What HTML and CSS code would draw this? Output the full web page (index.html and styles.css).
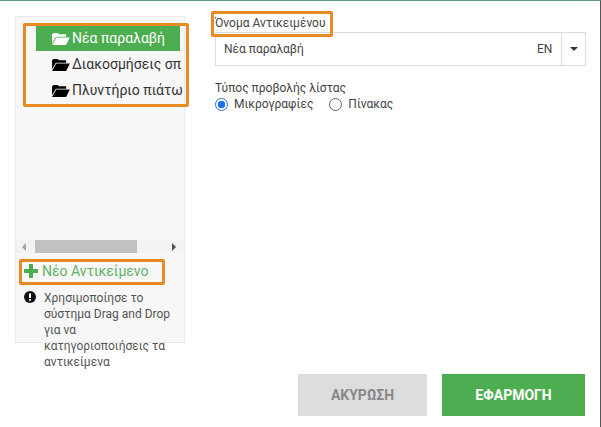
FILE: index.html
```html
<!DOCTYPE html>
<html lang="el">
<head>
<meta charset="utf-8">
<title>Αντικείμενα</title>
<link rel="stylesheet" href="styles.css">
</head>
<body>
<div class="dialog">
  <div class="main">
    <aside class="side">
      <div class="tree-wrap">
        <ul class="tree">
          <li class="node active">
            <svg class="folder" viewBox="0 0 20 16"><path d="M1 3.5 2.5 2H7l1.5 1.5H16V6H5L1 13Z"/><path d="M5.5 7H20l-4 8H1Z"/></svg>
            <span>Νέα παραλαβή</span>
          </li>
          <li class="node">
            <svg class="folder" viewBox="0 0 20 16"><path d="M1 3.5 2.5 2H7l1.5 1.5H16V6H5L1 13Z"/><path d="M5.5 7H20l-4 8H1Z"/></svg>
            <span>Διακοσμήσεις σπ</span>
          </li>
          <li class="node">
            <svg class="folder" viewBox="0 0 20 16"><path d="M1 3.5 2.5 2H7l1.5 1.5H16V6H5L1 13Z"/><path d="M5.5 7H20l-4 8H1Z"/></svg>
            <span>Πλυντήριο πιάτω</span>
          </li>
        </ul>
        <div class="hl hl-tree"></div>
      </div>
      <div class="scrollbar">
        <span class="arrow left"></span>
        <span class="track"><span class="thumb"></span></span>
        <span class="arrow right"></span>
      </div>
      <div class="add">
        <svg class="plus" viewBox="0 0 14 14"><path d="M5 0h4v5h5v4H9v5H5V9H0V5h5Z"/></svg>
        <span>Νέο Αντικείμενο</span>
        <div class="hl hl-add"></div>
      </div>
      <div class="hint">
        <svg class="info" viewBox="0 0 12 12"><circle cx="6" cy="6" r="6"/><rect class="mark" x="5" y="2.4" width="2" height="4.6"/><rect class="mark" x="5" y="8" width="2" height="1.8"/></svg>
        <p>Χρησιμοποίησε το σύστημα Drag and Drop για να κατηγοριοποιήσεις τα αντικείμενα</p>
      </div>
    </aside>
    <section class="form">
      <label class="name-label">Όνομα Αντικειμένου<span class="hl hl-label"></span></label>
      <div class="input-row">
        <span class="value">Νέα παραλαβή</span>
        <span class="lang">EN</span>
        <span class="caret-box"><span class="caret"></span></span>
      </div>
      <div class="view-label">Τύπος προβολής λίστας</div>
      <div class="radios">
        <span class="radio checked"></span><span class="radio-text">Μικρογραφίες</span>
        <span class="radio"></span><span class="radio-text">Πίνακας</span>
      </div>
    </section>
  </div>
  <footer class="actions">
    <button class="btn cancel">ΑΚΥΡΩΣΗ</button>
    <button class="btn apply">ΕΦΑΡΜΟΓΗ</button>
  </footer>
</div>
</body>
</html>
```
FILE: styles.css
```css
* { box-sizing: border-box; }
html, body { margin: 0; padding: 0; }
body {
  width: 601px;
  height: 427px;
  overflow: hidden;
  background: #fff;
  font-family: Roboto, "Liberation Sans", sans-serif;
  color: #444;
}
.dialog {
  width: 601px;
  height: 427px;
  border-top: 1px solid #5f9c7c;
  border-right: 1px solid #555;
  padding: 15px 15px 0 15px;
  display: flex;
  flex-direction: column;
  justify-content: space-between;
}
.main { display: flex; gap: 30px; height: 327px; }
.side {
  width: 170px;
  height: 327px;
  flex: none;
  background: #f7f7f7;
  border: 1px solid #e9e9e9;
  display: flex;
  flex-direction: column;
}
.tree-wrap { position: relative; height: 223px; flex: none; overflow: visible; }
.tree { list-style: none; margin: 0; padding: 8px 0 0 20px; width: 168px; overflow: hidden; }
.node {
  height: 26px;
  width: 144px;
  display: flex;
  align-items: center;
  padding-left: 15px;
  gap: 2px;
  font-size: 14px;
  white-space: nowrap;
  color: #333;
}
.node.active { background: #4cae50; color: #fff; }
.folder { width: 19px; height: 15px; flex: none; fill: #000; }
.active .folder { fill: #fff; }
.scrollbar {
  height: 14px;
  display: flex;
  align-items: center;
  padding: 0 8px 0 6px;
  background: #f3f3f3;
}
.arrow { width: 0; height: 0; border-top: 4px solid transparent; border-bottom: 4px solid transparent; flex: none; }
.arrow.left { border-right: 4px solid #a3a3a3; }
.arrow.right { border-left: 4px solid #505050; }
.track { flex: 1; height: 13px; padding: 0 2px 0 9px; }
.thumb { display: block; width: 102px; height: 13px; background: #c1c1c1; }
.add {
  position: relative;
  display: flex;
  align-items: center;
  gap: 4px;
  margin: 10px 0 0 8px;
  height: 20px;
  font-size: 14px;
  color: #62b165;
}
.plus { width: 14px; height: 14px; fill: #4cae50; flex: none; }
.hint {
  display: flex;
  gap: 8px;
  margin: 11px 0 0 8px;
  height: 80px;
}
.info { width: 12px; height: 12px; flex: none; margin-top: 1px; fill: #111; }
.info .mark { fill: #fff; }
.hint p {
  margin: 0;
  width: 130px;
  font-size: 12px;
  line-height: 16px;
  color: #555;
}
.form { flex: 1; min-width: 0; }
.name-label { position: relative; display: block; font-size: 12px; line-height: 14px; height: 16px; color: #444; }
.input-row {
  display: flex;
  align-items: center;
  height: 34px;
  border: 1px solid #dcdcdc;
  font-size: 12px;
  color: #444;
  margin-right: -1px;
}
.value { flex: 1; padding-left: 8px; }
.lang { width: 24px; }
.caret-box { width: 24px; height: 32px; border-left: 1px solid #dcdcdc; display: flex; align-items: center; justify-content: center; }
.caret { width: 0; height: 0; border-left: 4px solid transparent; border-right: 4px solid transparent; border-top: 4px solid #333; }
.view-label { font-size: 12px; margin-top: 15px; line-height: 15px; }
.radios { display: flex; align-items: center; font-size: 12px; line-height: 16px; }
.radio { width: 13px; height: 13px; border-radius: 50%; border: 1px solid #666; background: #fff; flex: none; margin-right: 6px; }
.radio.checked { border: 1px solid #1a73e8; background: radial-gradient(circle, #1a73e8 0 3.5px, #fff 4px); }
.radio-text { margin-right: 16px; }
.actions { display: flex; justify-content: flex-end; gap: 15px; margin-bottom: 11px; }
.btn {
  height: 42px;
  border: 0;
  font-family: Roboto, "Liberation Sans", sans-serif;
  font-size: 14px;
  font-weight: 700;
  padding: 0;
}
.cancel { width: 129px; background: #dcddde; color: #888; }
.apply { width: 143px; background: #4cae50; color: #fff; }
.hl { position: absolute; border: 3px solid #ea8a25; border-radius: 2px; pointer-events: none; }
.hl-tree { left: 7px; top: 6px; width: 166px; height: 84px; }
.hl-add { left: -5px; top: -4px; width: 146px; height: 26px; }
.hl-label { left: -4px; top: -5px; width: 122px; height: 26px; }
```
